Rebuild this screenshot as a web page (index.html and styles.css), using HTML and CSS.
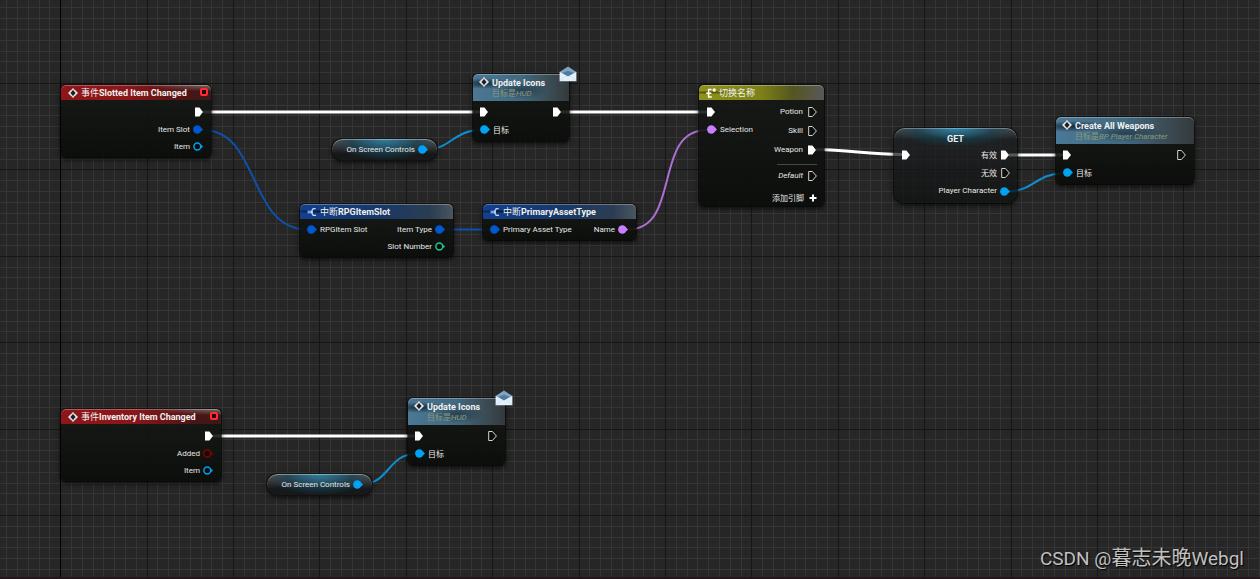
FILE: index.html
```html
<!DOCTYPE html>
<html lang="zh-CN">
<head>
<meta charset="utf-8">
<title>Blueprint Graph</title>
<link rel="stylesheet" href="styles.css">
</head>
<body>
<svg class="defs" width="0" height="0" aria-hidden="true">
  <symbol id="exec-on" viewBox="0 0 8 10"><path d="M0 0.4H4.4L8 5L4.4 9.6H0Z" fill="#fff"/></symbol>
  <symbol id="exec-off" viewBox="0 0 9 10"><path d="M0.7 0.5H4.4L8.4 5L4.4 9.5H0.7Z" fill="#0c0e0c" stroke="#d4d4d4" stroke-width="1"/></symbol>
  <symbol id="pin-on" viewBox="0 0 10 9"><circle cx="4.3" cy="4.5" r="4.2" fill="currentColor"/><path d="M8 2.6L10 4.5L8 6.4Z" fill="currentColor"/></symbol>
  <symbol id="pin-off" viewBox="0 0 10 9"><circle cx="4.3" cy="4.5" r="3.4" fill="#070a0a" stroke="currentColor" stroke-width="1.5"/><path d="M8.2 2.6L10 4.5L8.2 6.4Z" fill="currentColor"/></symbol>
  <symbol id="diamond" viewBox="0 0 10 10"><path d="M5 0L10 5L5 10L0 5Z" fill="#e8e8e8"/><path d="M5 2L7.600 5L5 8L2.400 5Z" fill="#182128"/><path d="M3.200 0.800L4.200 2.200M6.800 0.800L5.800 2.200M3.200 9.200L4.200 7.800M6.800 9.200L5.800 7.800" stroke="#444" stroke-width="0.500"/></symbol>
  <symbol id="break" viewBox="0 0 10 10"><path d="M0.5 5H5" stroke="#6fa0ff" stroke-width="2.8"/><path d="M4.2 5L6.2 1.6H8.6M4.6 5H6M4.2 5L6.2 8.4H9" fill="none" stroke="#c4d8f8" stroke-width="1.3"/></symbol>
  <symbol id="switch" viewBox="0 0 10 10"><path d="M5.6 1.4H2.6V9H5.8M0.2 5.2H5.4" fill="none" stroke="#fff" stroke-width="1.5"/><circle cx="8.2" cy="2" r="1.7" fill="#fff"/></symbol>
  <symbol id="mail" viewBox="0 0 18 16"><path d="M0.6 6L9 0.4L17.4 6L9 11.5Z" fill="#7fa5c4"/><path d="M3 7L9 4.8L15 7L9 11Z" fill="#527a9e"/><path d="M0.6 5.8L9 10.4L17.4 5.8V15.2H0.6Z" fill="#e2f0fb"/><path d="M0.8 15L7 9.6M17.2 15L11 9.6" stroke="#c0d6e8" stroke-width="0.6"/></symbol>
</svg>

<main class="graph">
  <svg class="grid" id="grid" aria-hidden="true"></svg>
  <svg class="wires" aria-hidden="true">
    <path class="wire exec" d="M203 112H480"/>
    <path class="wire exec" d="M561 112H707"/>
    <path class="wire exec" d="M816 149.500C850 150 866 154 902 154.500"/>
    <path class="wire exec" d="M1009 155H1063"/>
    <path class="wire exec" d="M213 436H415"/>
    <path class="wire struct" d="M203 130C260 130 248 229.500 307 229.500"/>
    <path class="wire struct" d="M443 229.500H490"/>
    <path class="wire name" d="M628 229.500C682 229.500 652 130 707 130"/>
    <path class="wire object" d="M427 149.500C449 149.500 455 130 480 130"/>
    <path class="wire object" d="M1007 191.500C1033 191.500 1037 173.500 1062 173.500"/>
    <path class="wire object" d="M363 484C388 484 389 454 415 454"/>
  </svg>

  <section class="node event n-slotted">
    <header class="head"><svg class="ico"><use href="#diamond"/></svg><h2><span class="cjk">事件</span>Slotted Item Changed</h2><i class="delegate"></i></header>
    <div class="body"><div class="outs">
      <div class="row"><svg class="exec-pin"><use href="#exec-on"/></svg></div>
      <div class="row data">Item Slot<svg class="pin c-struct"><use href="#pin-on"/></svg></div>
      <div class="row data">Item<svg class="pin c-object"><use href="#pin-off"/></svg></div>
    </div></div>
  </section>

  <section class="node call n-update-a">
    <header class="head"><svg class="ico"><use href="#diamond"/></svg><div><h2>Update Icons</h2><p class="sub"><span class="cjk">目标是</span>HUD</p></div></header>
    <div class="body"><div class="ins">
      <div class="row"><svg class="exec-pin"><use href="#exec-on"/></svg></div>
      <div class="row data"><svg class="pin c-object"><use href="#pin-on"/></svg><span class="cjk">目标</span></div>
    </div><div class="outs">
      <div class="row"><svg class="exec-pin"><use href="#exec-on"/></svg></div>
    </div></div>
    <svg class="mail"><use href="#mail"/></svg>
  </section>

  <section class="node pill n-osc-a">On Screen Controls<svg class="pin c-object"><use href="#pin-on"/></svg></section>

  <section class="node struct n-rpg">
    <header class="head"><svg class="ico"><use href="#break"/></svg><h2><span class="cjk">中断</span>RPGItemSlot</h2></header>
    <div class="body"><div class="ins">
      <div class="row data"><svg class="pin c-struct"><use href="#pin-on"/></svg>RPGItem Slot</div>
    </div><div class="outs">
      <div class="row data">Item Type<svg class="pin c-struct"><use href="#pin-on"/></svg></div>
      <div class="row data">Slot Number<svg class="pin c-int"><use href="#pin-off"/></svg></div>
    </div></div>
  </section>

  <section class="node struct n-asset">
    <header class="head"><svg class="ico"><use href="#break"/></svg><h2><span class="cjk">中断</span>PrimaryAssetType</h2></header>
    <div class="body"><div class="ins">
      <div class="row data"><svg class="pin c-struct"><use href="#pin-on"/></svg>Primary Asset Type</div>
    </div><div class="outs">
      <div class="row data">Name<svg class="pin c-name"><use href="#pin-on"/></svg></div>
    </div></div>
  </section>

  <section class="node switch n-switch">
    <header class="head"><svg class="ico"><use href="#switch"/></svg><h2><span class="cjk">切换名称</span></h2></header>
    <div class="body"><div class="ins">
      <div class="row"><svg class="exec-pin"><use href="#exec-on"/></svg></div>
      <div class="row data"><svg class="pin c-name"><use href="#pin-on"/></svg>Selection</div>
    </div><div class="outs">
      <div class="row">Potion<svg class="exec-pin off"><use href="#exec-off"/></svg></div>
      <div class="row">Skill<svg class="exec-pin off"><use href="#exec-off"/></svg></div>
      <div class="row">Weapon<svg class="exec-pin"><use href="#exec-on"/></svg></div>
      <hr class="rule">
      <div class="row"><em>Default</em><svg class="exec-pin off"><use href="#exec-off"/></svg></div>
      <button class="add" type="button"><span class="cjk">添加引脚</span><svg class="plus" viewBox="0 0 8 8"><path d="M4 0.500V7.500M0.500 4H7.500" stroke="#fff" stroke-width="2"/></svg></button>
    </div></div>
  </section>

  <section class="node get n-get">
    <header class="head"><h2>GET</h2></header>
    <div class="body"><div class="ins">
      <div class="row"><svg class="exec-pin"><use href="#exec-on"/></svg></div>
    </div><div class="outs">
      <div class="row"><span class="cjk">有效</span><svg class="exec-pin"><use href="#exec-on"/></svg></div>
      <div class="row"><span class="cjk">无效</span><svg class="exec-pin off"><use href="#exec-off"/></svg></div>
      <div class="row data">Player Character<svg class="pin c-object"><use href="#pin-on"/></svg></div>
    </div></div>
  </section>

  <section class="node call n-create">
    <header class="head"><svg class="ico"><use href="#diamond"/></svg><div><h2>Create All Weapons</h2><p class="sub"><span class="cjk">目标是</span>BP Player Character</p></div></header>
    <div class="body"><div class="ins">
      <div class="row"><svg class="exec-pin"><use href="#exec-on"/></svg></div>
      <div class="row data"><svg class="pin c-object"><use href="#pin-on"/></svg><span class="cjk">目标</span></div>
    </div><div class="outs">
      <div class="row"><svg class="exec-pin off"><use href="#exec-off"/></svg></div>
    </div></div>
  </section>

  <section class="node event n-inventory">
    <header class="head"><svg class="ico"><use href="#diamond"/></svg><h2><span class="cjk">事件</span>Inventory Item Changed</h2><i class="delegate"></i></header>
    <div class="body"><div class="outs">
      <div class="row"><svg class="exec-pin"><use href="#exec-on"/></svg></div>
      <div class="row data">Added<svg class="pin c-bool"><use href="#pin-off"/></svg></div>
      <div class="row data">Item<svg class="pin c-object"><use href="#pin-off"/></svg></div>
    </div></div>
  </section>

  <section class="node call n-update-b">
    <header class="head"><svg class="ico"><use href="#diamond"/></svg><div><h2>Update Icons</h2><p class="sub"><span class="cjk">目标是</span>HUD</p></div></header>
    <div class="body"><div class="ins">
      <div class="row"><svg class="exec-pin"><use href="#exec-on"/></svg></div>
      <div class="row data"><svg class="pin c-object"><use href="#pin-on"/></svg><span class="cjk">目标</span></div>
    </div><div class="outs">
      <div class="row"><svg class="exec-pin off"><use href="#exec-off"/></svg></div>
    </div></div>
    <svg class="mail"><use href="#mail"/></svg>
  </section>

  <section class="node pill n-osc-b">On Screen Controls<svg class="pin c-object"><use href="#pin-on"/></svg></section>

  <p class="watermark">CSDN @<span class="name">暮志未晚</span>Webgl</p>
</main>
<script src="grid.js"></script>
</body>
</html>
```
FILE: styles.css
```css
* { box-sizing: border-box; }
body { margin: 0; background: #262626; }
h2, p { margin: 0; }
.defs { position: absolute; }

.graph {
  position: relative;
  min-height: 100vh;
  overflow: hidden;
  border-bottom: 2px solid #24161b;
  color: #e8e8e8;
  font: 8px/10px Roboto, "Noto Sans CJK SC", sans-serif;
}
.grid, .wires { position: absolute; inset: 0; width: 100%; height: 100%; }
.minor { fill: #353535; }
.major { fill: #161616; }
.origin { fill: #000; }

.wire { fill: none; stroke-width: 2; }
.wire.exec { stroke: #fff; stroke-width: 3; }
.wire.struct { stroke: #0d51ae; }
.wire.name { stroke: #ac6fd2; }
.wire.object { stroke: #0c8fd2; }
.c-struct { color: #0058d0; }
.c-object { color: #00a2f2; }
.c-name { color: #c880ff; }
.c-int { color: #1fc795; }
.c-bool { color: #8b0000; }

.node {
  position: absolute;
  border-radius: 5px;
  background: linear-gradient(rgba(20, 24, 20, .88), rgba(10, 12, 10, .92));
  box-shadow: 0 0 0 1px rgba(0, 0, 0, .45), 0 2px 4px 1px rgba(0, 0, 0, .6);
}
.head {
  display: flex;
  align-items: flex-start;
  gap: 3px;
  padding: 2px 3px 1px 7px;
  border-radius: 5px 5px 0 0;
  box-shadow: inset 0 1px 0 rgba(255, 255, 255, .3);
}
.head h2 {
  color: #f0f0f0;
  font: bold 9px/12px Roboto, "Noto Sans CJK SC", sans-serif;
  white-space: nowrap;
}
.cjk { font-family: "Noto Sans CJK SC", sans-serif; font-weight: 400; font-style: normal; line-height: 0; }
.row .cjk { line-height: 10px; }
.ico { width: 10px; height: 10px; flex: none; }
.event .ico, .struct .ico, .switch .ico { margin-top: 1px; }
.delegate { width: 8px; height: 8px; margin: 1px 0 0 auto; border: 2px solid #ff2d2d; border-radius: 2px; background: #2a0505; }
.sub { color: #8c9a7a; font: italic 8px/10px Roboto, "Noto Sans CJK SC", sans-serif; white-space: nowrap; }

.body { display: flex; justify-content: space-between; padding: 3px 8px 2px 7px; }
.outs { display: flex; flex-direction: column; align-items: flex-end; margin-left: auto; }
.row { display: flex; align-items: center; gap: 4px; height: 18px; white-space: nowrap; }
.row.data { height: 17px; gap: 3px; }
.exec-pin { width: 8px; height: 10px; flex: none; }
.exec-pin.off { width: 9px; }
.pin { width: 10px; height: 9px; flex: none; }

.event .head { background: radial-gradient(ellipse at 100% 0, rgba(140, 120, 120, .8), transparent 30%), linear-gradient(90deg, #8f1518, #8a1719 45%, #4a1414 85%, #3a1a1a); }
.call .head { background: radial-gradient(ellipse at 12% 35%, rgba(14, 28, 40, .85), transparent 22%), radial-gradient(ellipse at 50% 60%, rgba(28, 48, 64, .7), transparent 40%), linear-gradient(90deg, #4b7896, #41697f 50%, #3a474e 85%, #343a3c); }
.struct .head { background: radial-gradient(ellipse at 12% 50%, rgba(5, 15, 40, .8), transparent 18%), linear-gradient(90deg, #12408c, #173868 50%, #2b3d52 85%, #4a5660); }
.switch .head { background: radial-gradient(ellipse at 8% 50%, rgba(50, 50, 0, .7), transparent 18%), linear-gradient(90deg, #8f921a, #7d8018 50%, #55561f 75%, #57585a); }
.call .body, .struct .body { padding-top: 2px; }
.call .body { padding-bottom: 3px; }
.call .head { gap: 3px; padding: 3px 3px 2px 6px; }

.mail { position: absolute; top: -8px; right: -8px; width: 18px; height: 16px; }

.switch .body { padding: 2px 7px 0 8px; }
.switch .ins { padding-top: 1px; }
.switch .outs .row { height: 19px; gap: 5px; }
.switch .outs .exec-pin:not(.off) { margin-right: 1px; }
.rule { width: 40px; height: 1px; margin: 5px 0 1px; border: 0; background: #454845; }
.add { display: flex; align-items: center; gap: 5px; margin: 4px 0 0; padding: 0; border: 0; background: none; color: #e8e8e8; font: 8px/16px "Noto Sans CJK SC", sans-serif; cursor: pointer; }
.add .cjk { line-height: 17px; }
.plus { width: 8px; height: 8px; }

.get { border-radius: 11px; background: linear-gradient(rgba(30, 34, 36, .7), rgba(16, 17, 17, .8)); }
.get .head { justify-content: center; padding: 5px 0 1px; border-radius: 11px 11px 0 0; background: radial-gradient(ellipse at 50% 0, rgba(46, 140, 180, .9), rgba(22, 66, 84, .6) 45%, transparent 75%), linear-gradient(rgba(120, 124, 126, .5), transparent 60%); }
.get .body { padding: 0 7px 3px 8px; }
.get .row { height: 18px; }
.get .exec-pin:not(.off) { margin-right: 1px; }

.pill {
  display: flex;
  align-items: center;
  justify-content: flex-end;
  gap: 3px;
  height: 21px;
  padding: 0 9px 0 8px;
  border-radius: 11px;
  background: radial-gradient(ellipse at 50% 0, rgba(46, 130, 168, .9), rgba(24, 66, 84, .7) 45%, transparent 72%), linear-gradient(#55585a, #161819 70%);
  box-shadow: inset 0 1px 0 rgba(255, 255, 255, .4), 0 0 0 1px #111, 0 2px 4px 1px rgba(0, 0, 0, .6);
  white-space: nowrap;
}

/* Node placement on the canvas */
.n-slotted { left: 61px; top: 85px; width: 150px; }
.n-update-a { left: 473px; top: 74px; width: 96px; }
.n-osc-a { left: 332px; top: 139px; width: 105px; }
.n-rpg { left: 300px; top: 204px; width: 153px; }
.n-asset { left: 483px; top: 204px; width: 153px; }
.n-switch { left: 699px; top: 85px; width: 125px; }
.n-get { left: 894px; top: 128px; width: 123px; }
.n-create { left: 1056px; top: 117px; width: 138px; }
.n-inventory { left: 61px; top: 409px; width: 160px; }
.n-update-b { left: 408px; top: 398px; width: 97px; }
.n-osc-b { left: 267px; top: 474px; width: 105px; }

.watermark {
  position: absolute;
  right: 16px;
  bottom: 6px;
  color: #c0c0c0;
  font: 19px/24px Roboto, "Noto Sans CJK SC", sans-serif;
  text-shadow: 1px 1px 1px #000;
}
.watermark .name { font: 20px/20px "Noto Sans CJK SC", sans-serif; }
```
FILE: grid.js
```javascript
// Background grid: 16-unit cells at the current zoom, a major line every 8 cells.
const CELL = 16 * 0.675;
const ORIGIN_X = 60.6;
const MAJOR_Y = 83.5;
const svg = document.getElementById("grid");

function line(cls, x, y, w, h) {
  const r = document.createElementNS("http://www.w3.org/2000/svg", "rect");
  r.setAttribute("class", cls);
  r.setAttribute("x", x);
  r.setAttribute("y", y);
  r.setAttribute("width", w);
  r.setAttribute("height", h);
  svg.appendChild(r);
}

function draw() {
  svg.replaceChildren();
  const w = window.innerWidth, h = window.innerHeight;
  for (const major of [false, true]) {
    const cls = major ? "major" : "minor";
    for (let k = -8; ORIGIN_X + k * CELL < w; k++) {
      if ((k % 8 === 0) === major) line(cls, Math.floor(ORIGIN_X + k * CELL + 0.001), 0, 1, h);
    }
    for (let k = -8; MAJOR_Y + k * CELL < h; k++) {
      if ((k % 8 === 0) === major) line(cls, 0, Math.floor(MAJOR_Y + k * CELL + 0.001), w, 1);
    }
  }
  line("origin", Math.floor(ORIGIN_X), 0, 1, h);
}

window.addEventListener("resize", draw);
draw();
```
